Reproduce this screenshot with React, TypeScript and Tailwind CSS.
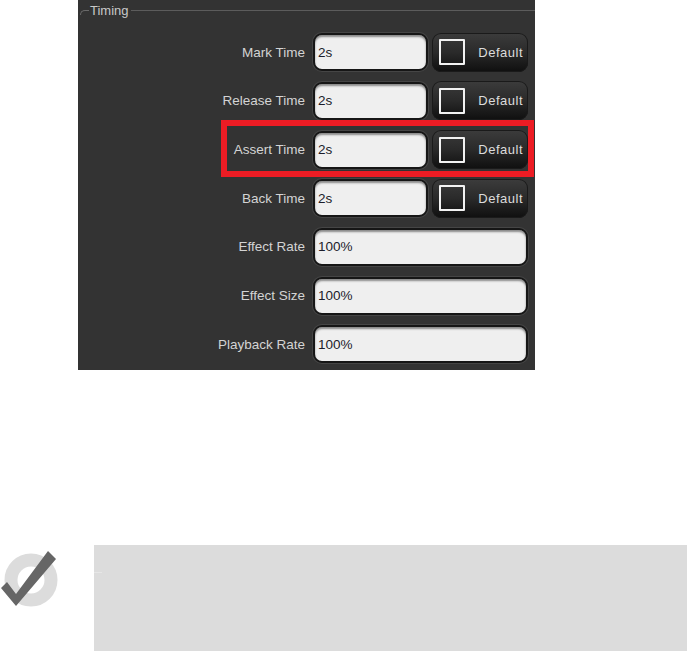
const sans = "font-['Liberation_Sans',Arial,sans-serif]";

function TimeField({ value }: { value: string }) {
  return (
    <div className="h-[38px] flex-1 flex items-center rounded-[9px] border-2 border-[#161616] bg-[#efefef] pl-[3px] pt-px text-[13.5px] text-[#1c1c2a] shadow-[0_0_0_1px_#454545,inset_0_2px_2px_#8a8a8a]">
      {value}
    </div>
  );
}

function DefaultButton() {
  return (
    <div className="ml-[4px] h-[39px] w-[96px] flex items-center justify-between rounded-[9px] bg-gradient-to-b from-[#3c3c3c] via-[#2a2a2a] to-[#0f0f0f] pl-[7px] pr-[5px] text-[13px] tracking-[0.5px] text-[#dcdcdc] shadow-[inset_0_0_0_1px_#1a1a1a]">
      <div className="w-[26px] h-[26px] border-2 border-[#f2f2f2] rounded-[1px]" />
      <span>Default</span>
    </div>
  );
}

function Row({ label, value, hasDefault }: { label: string; value: string; hasDefault?: boolean }) {
  return (
    <div className="h-[48.67px] flex items-center">
      <div className="w-[227px] pt-px text-right text-[13.5px] text-[#d4d4d4]">{label}</div>
      <div className="ml-[8px] w-[215px] flex items-center">
        <TimeField value={value} />
        {hasDefault && <DefaultButton />}
      </div>
    </div>
  );
}

export default function App() {
  return (
    <div className={`w-[687px] h-[651px] bg-white overflow-hidden ${sans}`}>
      <div className="relative ml-[78px] w-[457px] h-[370px] bg-[#333333]">
        {/* group box title */}
        <div className="h-[28px] flex items-start pt-[3px] pl-[2px]">
          <div className="mt-[7px] w-[9px] h-[5px] border-t border-l border-[#6a6a6a] rounded-tl-[6px]" />
          <span className="ml-[1px] text-[13px] leading-[15px] text-[#c8c8c8]">Timing</span>
          <div className="mt-[7px] ml-[2px] flex-1 border-t border-[#5c5c5c]" />
        </div>

        <Row label="Mark Time" value="2s" hasDefault />
        <Row label="Release Time" value="2s" hasDefault />
        <Row label="Assert Time" value="2s" hasDefault />
        <Row label="Back Time" value="2s" hasDefault />
        <Row label="Effect Rate" value="100%" />
        <Row label="Effect Size" value="100%" />
        <Row label="Playback Rate" value="100%" />

        {/* red callout over the third row */}
        <div className="absolute left-[143px] top-[120px] w-[313px] h-[57px] border-[6px] border-[#ed1c24]" />
      </div>

      <div className="mt-[175px] flex items-start">
        <svg width="58" height="60" viewBox="0 0 58 60" className="mt-[4px] shrink-0">
          <circle cx="31" cy="31" r="20" fill="none" stroke="#dcdcdc" strokeWidth="13" />
          <polygon points="1,39 7,33 16,45 48,2 56,10 16,57" fill="#666666" />
        </svg>
        <div className="relative ml-[36px] w-[593px] h-[106px] bg-[#dcdcdc]">
          {/* faint mark at the note's left edge */}
          <div className="absolute left-0 top-[27px] w-[8px] h-px bg-[#e6e6e6]" />
        </div>
      </div>
    </div>
  );
}
